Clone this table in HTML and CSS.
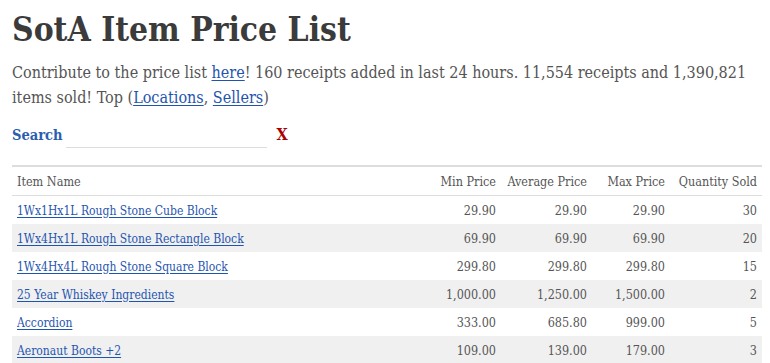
FILE: index.html
```html
<!DOCTYPE html>
<html>
<head>
<meta charset="utf-8">
<link rel="stylesheet" href="styles.css">
</head>
<body>
<h1 class="title">SotA Item Price List</h1>
<p class="intro">Contribute to the price list <a href="#">here</a>! 160 receipts added in last 24 hours. 11,554 receipts and 1,390,821 items sold! Top (<a href="#">Locations</a>, <a href="#">Sellers</a>)</p>
<div class="search">
  <label class="search-label">Search</label>
  <input class="search-input" type="text">
  <span class="clear">X</span>
</div>
<table class="prices">
  <colgroup>
    <col class="c-name"><col class="c-min"><col class="c-avg"><col class="c-max"><col class="c-qty">
  </colgroup>
  <thead>
    <tr><th class="name">Item Name</th><th>Min Price</th><th>Average Price</th><th>Max Price</th><th>Quantity Sold</th></tr>
  </thead>
  <tbody>
    <tr><td class="name"><a href="#">1Wx1Hx1L Rough Stone Cube Block</a></td><td>29.90</td><td>29.90</td><td>29.90</td><td>30</td></tr>
    <tr><td class="name"><a href="#">1Wx4Hx1L Rough Stone Rectangle Block</a></td><td>69.90</td><td>69.90</td><td>69.90</td><td>20</td></tr>
    <tr><td class="name"><a href="#">1Wx4Hx4L Rough Stone Square Block</a></td><td>299.80</td><td>299.80</td><td>299.80</td><td>15</td></tr>
    <tr><td class="name"><a href="#">25 Year Whiskey Ingredients</a></td><td>1,000.00</td><td>1,250.00</td><td>1,500.00</td><td>2</td></tr>
    <tr><td class="name"><a href="#">Accordion</a></td><td>333.00</td><td>685.80</td><td>999.00</td><td>5</td></tr>
    <tr><td class="name"><a href="#">Aeronaut Boots +2</a></td><td>109.00</td><td>139.00</td><td>179.00</td><td>3</td></tr>
  </tbody>
</table>
</body>
</html>
```
FILE: styles.css
```css
body {
  margin: 0;
  padding: 0 8px 0 12px;
  font-family: "DejaVu Serif Condensed", "DejaVu Serif", serif;
  color: #444;
  background: #fff;
}
.title {
  margin: 8px 0 0;
  font-size: 33.3px;
  line-height: 44px;
  font-weight: bold;
  color: #3b3b3b;
}
.intro {
  margin: 8px 0 0;
  font-size: 16px;
  line-height: 25px;
  color: #555;
}
.intro a, .prices a {
  color: #1f55b0;
  text-decoration: underline;
  text-underline-offset: 2px;
}
.search {
  display: flex;
  align-items: center;
  margin-top: 11px;
  height: 26px;
}
.search-label {
  font-size: 14.5px;
  font-weight: bold;
  color: #2a5db0;
}
.search-input {
  width: 201px;
  height: 26px;
  margin-left: 4px;
  border: none;
  border-bottom: 1px solid #ddd;
  outline: none;
  padding: 0;
}
.clear {
  margin-left: 9px;
  font-size: 16px;
  font-weight: bold;
  color: #a00;
}
.prices {
  margin-top: 18px;
  width: 750px;
  table-layout: fixed;
  border-collapse: collapse;
  border-top: 2px solid #ddd;
  font-size: 12.5px;
  color: #555;
}
.c-name { width: 409px; }
.c-min { width: 80px; }
.c-avg { width: 91px; }
.c-max { width: 78px; }
.c-qty { width: 92px; }
.prices th {
  font-weight: normal;
  text-align: right;
  height: 28px;
  padding: 0 5px;
  border-bottom: 1px solid #ddd;
  white-space: nowrap;
}
.prices td {
  text-align: right;
  height: 28px;
  padding: 0 5px;
  white-space: nowrap;
}
.prices td a { font-size: 12px; }
.prices .name { text-align: left; }
.prices tbody tr:nth-child(even) { background: #f0f0f0; }
```
